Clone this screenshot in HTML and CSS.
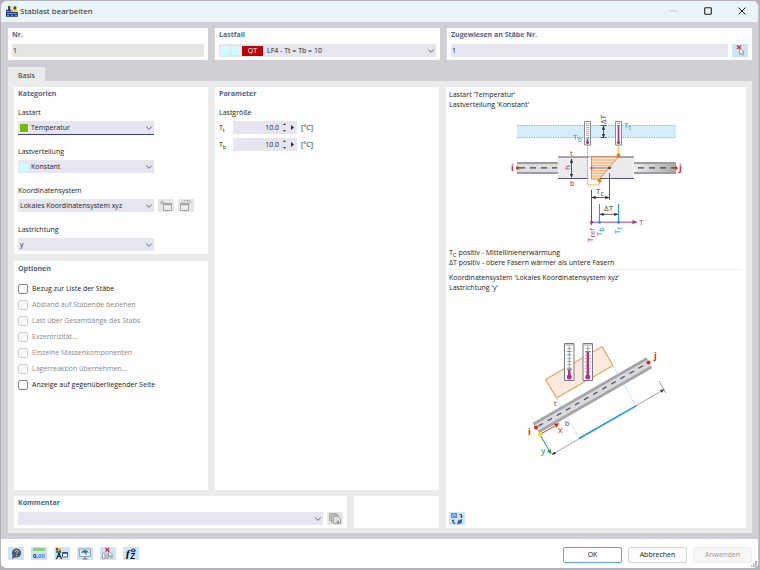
FILE: index.html
```html
<!DOCTYPE html>
<html lang="de">
<head>
    <meta charset="UTF-8">
    <meta name="viewport" content="width=device-width, initial-scale=1.0">
    <title>Stablast bearbeiten</title>
    <link rel="stylesheet" href="styles.css">
</head>
<body>
    <!-- Shared symbols -->
    <svg class="symbols" aria-hidden="true">
        <symbol id="chevron" viewBox="0 0 8 6"><path d="M1.2 1.5 4 4.3 6.8 1.5" fill="none" stroke="#555" stroke-width=".9"/></symbol>
        <marker id="arrow" viewBox="0 0 6 6" refX="5.5" refY="3" markerWidth="4" markerHeight="4" markerUnits="userSpaceOnUse" orient="auto-start-reverse"><path d="M0 .5 6 3 0 5.5z" fill="#333"/></marker>
        <marker id="arrow-purple" viewBox="0 0 6 6" refX="5.5" refY="3" markerWidth="5" markerHeight="5" markerUnits="userSpaceOnUse" orient="auto"><path d="M0 .5 6 3 0 5.5z" fill="#b03a8c"/></marker>
        <marker id="arrow-red" viewBox="0 0 6 6" refX="5.5" refY="3" markerWidth="5" markerHeight="5" markerUnits="userSpaceOnUse" orient="auto"><path d="M0 .3 6 3 0 5.7z" fill="#d03010"/></marker>
        <marker id="arrow-green" viewBox="0 0 6 6" refX="5.5" refY="3" markerWidth="5" markerHeight="5" markerUnits="userSpaceOnUse" orient="auto"><path d="M0 .3 6 3 0 5.7z" fill="#12a050"/></marker>
    </svg>

    <div class="window">
        <header class="titlebar">
            <svg class="app-icon" viewBox="0 0 12 12">
                <rect x="1" y="1" width="4" height="4" fill="#fff2b8"/>
                <path d="M5 0h6.5v6H5z" fill="#f7e9b0"/>
                <path d="M2.2 1h2v4.5h-2zM0 4.8h7v1.7H0z" fill="#1f3473"/>
                <path d="M7 3h3M8.5 1.5 10 3 8.5 4.5" stroke="#1f3473" stroke-width="1.1" fill="none"/>
                <path d="M5 5h6.5v1.6H5z" fill="#f0c330"/>
                <path d="M0 7h11.8v4.8H0z" fill="#16337f"/>
                <path d="M1 8.6h9.6M1 10.4h2M5 10.4h2M9 10.4h2" stroke="#c9d4ee" stroke-width=".7"/>
            </svg>
            <span class="title">Stablast bearbeiten</span>
            <div class="window-controls">
                <button type="button" aria-label="Minimieren" disabled><svg viewBox="0 0 10 10"><path d="M1 5h8" stroke="#c3cdd2" stroke-width="1"/></svg></button>
                <button type="button" aria-label="Maximieren"><svg viewBox="0 0 10 10"><rect x="1.7" y="1.7" width="6.6" height="6.6" rx=".8" fill="none" stroke="#222" stroke-width="1.1"/></svg></button>
                <button type="button" aria-label="Schließen"><svg viewBox="0 0 10 10"><path d="m1.5 1.5 7 7m0-7-7 7" stroke="#222" stroke-width="1"/></svg></button>
            </div>
        </header>

        <main class="content">
            <div class="top-row">
                <section class="card">
                    <h2><label for="number">Nr.</label></h2>
                    <input class="text readonly" id="number" type="text" value="1" readonly>
                </section>
                <section class="card">
                    <h2><label for="loadcase">Lastfall</label></h2>
                    <div class="select">
                        <span class="swatch cyan"></span>
                        <span class="swatch cyan"></span>
                        <span class="tag">QT</span>
                        <select id="loadcase"><option>LF4 - Tt = Tb = 10</option></select>
                        <svg class="chevron"><use href="#chevron"/></svg>
                    </div>
                </section>
                <section class="card">
                    <h2><label for="members">Zugewiesen an Stäbe Nr.</label></h2>
                    <div class="row">
                        <input class="text" id="members" type="text" value="1">
                        <button type="button" class="icon-btn" aria-label="Stäbe auswählen">
                            <svg viewBox="0 0 16 13"><path d="m5 1.5 4 3.5M9 1.5 5 5" stroke="#dc2030" stroke-width="1.2"/><path d="M7.5 4v6.4L9 9l1.4 2.4 1.2-.7-1.2-2.2 1.8-.3z" fill="#fff" stroke="#777" stroke-width=".7"/></svg>
                        </button>
                    </div>
                </section>
            </div>

            <nav class="tabs"><button type="button" class="tab">Basis</button></nav>

            <div class="tab-page">
                <div class="form-area">
                    <div class="columns">
                        <div class="left-column">
                            <section class="card categories">
                                <h2>Kategorien</h2>
                                <div class="field">
                                    <label for="type">Lastart</label>
                                    <div class="select active">
                                        <span class="swatch green"></span>
                                        <select id="type"><option>Temperatur</option></select>
                                        <svg class="chevron"><use href="#chevron"/></svg>
                                    </div>
                                </div>
                                <div class="field">
                                    <label for="distribution">Lastverteilung</label>
                                    <div class="select">
                                        <span class="swatch cyan"></span>
                                        <select id="distribution"><option>Konstant</option></select>
                                        <svg class="chevron"><use href="#chevron"/></svg>
                                    </div>
                                </div>
                                <div class="field">
                                    <label for="system">Koordinatensystem</label>
                                    <div class="row">
                                        <div class="select">
                                            <select id="system"><option>Lokales Koordinatensystem xyz</option></select>
                                            <svg class="chevron"><use href="#chevron"/></svg>
                                        </div>
                                        <button type="button" class="icon-btn off" aria-label="Neues Koordinatensystem" disabled>
                                            <svg viewBox="0 0 16 13" fill="none" stroke="#a5a5a5"><path d="M5.5 4.5h8v7h-8z" fill="#eee"/><path d="M5.5 5.5h8" stroke-width="1.4"/><path d="M4 1v5M1.5 3.5h5M2.2 1.8l3.5 3.5M5.7 1.8 2.2 5.3" stroke-width=".6"/></svg>
                                        </button>
                                        <button type="button" class="icon-btn off" aria-label="Koordinatensystem bearbeiten" disabled>
                                            <svg viewBox="0 0 16 13" fill="none" stroke="#a5a5a5"><path d="M2.5 4.5h8v7h-8z" fill="#eee"/><path d="M2.5 5.5h8" stroke-width="1.4"/><path d="M5 3.5c1-2 3-2 4-1.5l3-1M9 3l3 2M11 1l2.500 3" stroke-width=".9"/></svg>
                                        </button>
                                    </div>
                                </div>
                                <div class="field">
                                    <label for="direction">Lastrichtung</label>
                                    <div class="select">
                                        <select id="direction"><option>y</option></select>
                                        <svg class="chevron"><use href="#chevron"/></svg>
                                    </div>
                                </div>
                            </section>

                            <section class="card options">
                                <h2>Optionen</h2>
                                <label><input type="checkbox">Bezug zur Liste der Stäbe</label>
                                <label class="off"><input type="checkbox" disabled>Abstand auf Stabende beziehen</label>
                                <label class="off"><input type="checkbox" disabled>Last über Gesamtlänge des Stabs</label>
                                <label class="off"><input type="checkbox" disabled>Exzentrizität...</label>
                                <label class="off"><input type="checkbox" disabled>Einzelne Massenkomponenten</label>
                                <label class="off"><input type="checkbox" disabled>Lagerreaktion übernehmen...</label>
                                <label><input type="checkbox">Anzeige auf gegenüberliegender Seite</label>
                            </section>
                        </div>

                        <section class="card parameters">
                            <h2>Parameter</h2>
                            <p>Lastgröße</p>
                            <div class="param">
                                <label for="tt">T<sub>t</sub></label>
                                <div class="number">
                                    <input id="tt" type="text" value="10.0">
                                    <svg viewBox="0 0 16 13"><path d="M4 4 5.5 2.2 7 4zM4 9l1.5 1.8L7 9zM12 4v5l3-2.5z" fill="#333"/></svg>
                                </div>
                                <span>[°C]</span>
                            </div>
                            <div class="param">
                                <label for="tb">T<sub>b</sub></label>
                                <div class="number">
                                    <input id="tb" type="text" value="10.0">
                                    <svg viewBox="0 0 16 13"><path d="M4 4 5.5 2.2 7 4zM4 9l1.5 1.8L7 9zM12 4v5l3-2.5z" fill="#333"/></svg>
                                </div>
                                <span>[°C]</span>
                            </div>
                        </section>
                    </div>

                    <div class="bottom-row">
                        <section class="card">
                            <h2><label for="comment">Kommentar</label></h2>
                            <div class="row">
                                <div class="select">
                                    <select id="comment"><option></option></select>
                                    <svg class="chevron"><use href="#chevron"/></svg>
                                </div>
                                <button type="button" class="icon-btn off" aria-label="Kommentare" disabled>
                                    <svg viewBox="0 0 16 13" fill="#ccc" stroke="#999" stroke-width=".8"><path d="M2.5 1.5h7v7h-7z"/><path d="M4.5 3h7v7h-7z"/><path d="M6.5 4.5h5l2 2v5h-7z" fill="#e2e2e2"/><path d="M10 9h2v2h-2z" fill="#999"/></svg>
                                </button>
                            </div>
                        </section>
                        <section class="card"></section>
                    </div>
                </div>

                <section class="card preview">
                    <div class="preview-part">
                        <p>Lastart 'Temperatur'<br>Lastverteilung 'Konstant'</p>
                        <svg class="section-diagram" viewBox="506 112 180 136">
                            <defs>
                                <linearGradient id="beam-fade"><stop offset="0" stop-color="#ececec"/><stop offset="1" stop-color="#a9a9a9"/></linearGradient>
                            </defs>
                            <!-- temperature band -->
                            <rect x="517" y="125.5" width="159" height="12" fill="#d5edf9"/>
                            <path d="M517 125.5h159M517 137.5h159" stroke="#4ab4e6" stroke-width=".9" stroke-dasharray="1.2 1.2"/>
                            <!-- beam -->
                            <path d="M517 162h41v11.5h-41z" fill="#dedede"/>
                            <path d="M634 162h42v11.5h-42z" fill="url(#beam-fade)"/>
                            <path d="M517 163h41M517 173h41M634 163h42M634 173h42" stroke="#9c9ca0" stroke-width="1.8"/>
                            <path d="M558 157h76v5l-2 3 3 3-2 3 1 8h-76z" fill="#ebebed"/>
                            <path d="M558 157h76M558 178.5h76" stroke="#555566"/>
                            <path d="M519 167.8h38M638 167.8h37" stroke="#45455f" stroke-width="1.2" stroke-dasharray="6 5"/>
                            <path d="M588.500 157h2.500v22h-2.500z" fill="#fff"/>
                            <!-- temperature profile -->
                            <path d="M591.500 157h26.500l-18.500 22h-8z" fill="#fbe6d2" stroke="#ee8420"/>
                            <path d="M591 160h24M591 163h22M591 165.700h20M591 170.700h15M591 173.300h13M591 176h11" stroke="#f0994a" stroke-width=".8"/>
                            <path d="M587.5 145v39.800h12V180M618.500 145v9" fill="none" stroke="#ee8420" stroke-width=".9" stroke-dasharray="1.5 1"/>
                            <path d="M591 168h18" stroke="#55505f" stroke-width=".8"/>
                            <circle cx="618.500" cy="155.200" r="1.900" fill="#f08018"/>
                            <circle cx="599.500" cy="180.500" r="1.900" fill="#f08018"/>
                            <circle cx="591.500" cy="168" r="1.200" fill="#b03a8c"/>
                            <circle cx="609.500" cy="168" r="1.300" fill="#333344"/>
                            <circle cx="517.500" cy="168" r="1.700" fill="#d83a10"/>
                            <circle cx="676" cy="168" r="1.700" fill="#d83a10"/>
                            <!-- thermometers -->
                            <path d="M584.500 121.500h6v23.500h-6zM615.500 121.500h6v23.500h-6z" fill="#fff" stroke="#8a8a90"/>
                            <path d="M587.500 123v15M618.500 123v3" stroke="#999" stroke-width="3" stroke-dasharray=".7 1.300"/>
                            <path d="M587.500 139v4M618.500 126v17" stroke="#b02a80" stroke-width="1.700"/>
                            <circle cx="587.500" cy="142.500" r="1.500" fill="#b02a80"/>
                            <circle cx="618.500" cy="142.500" r="1.500" fill="#b02a80"/>
                            <path d="M586 138h3M617 125.500h3" stroke="#1a9ce0"/>
                            <!-- dimensions -->
                            <g stroke="#333" stroke-width=".8" marker-start="url(#arrow)" marker-end="url(#arrow)">
                                <path d="M603.500 126v11.500"/>
                                <path d="M571.500 159v18.500"/>
                                <path d="M592 197.500h17"/>
                                <path d="M600 214.300h18"/>
                            </g>
                            <path d="M600.500 125.500h6M600.500 137.500h6M591.500 190v35M609.500 173v27" stroke="#333" stroke-width=".8"/>
                            <path d="M599.500 204v18M618.500 204v18" stroke="#18a0e4"/>
                            <path d="M591 222.200h46" stroke="#b03a8c" marker-end="url(#arrow-purple)"/>
                            <circle cx="591.500" cy="222.200" r="1.600" fill="#b03a8c"/>
                            <circle cx="599.500" cy="222.200" r="1.600" fill="#18a0e4"/>
                            <circle cx="618.500" cy="222.200" r="1.600" fill="#18a0e4"/>
                            <g class="t8">
                                <text transform="translate(606 124) rotate(-90)">ΔT</text>
                                <text class="blue" x="573" y="140">T<tspan class="idx" dy="2">b</tspan></text>
                                <text class="blue" x="624" y="128">T<tspan class="idx" dy="2">t</tspan></text>
                                <text x="596" y="194">T<tspan class="idx" dy="2">c</tspan></text>
                                <text x="604" y="211">ΔT</text>
                                <text class="purple" x="639" y="225">T</text>
                                <text class="purple" transform="translate(593 242) rotate(-90)">T<tspan class="idx" dy="2">ref</tspan></text>
                                <text class="blue" transform="translate(602 236) rotate(-90)">T<tspan class="idx" dy="2">b</tspan></text>
                                <text class="blue" transform="translate(620 234) rotate(-90)">T<tspan class="idx" dy="2">t</tspan></text>
                                <text transform="translate(570 170) rotate(-90)">h</text>
                                <text class="idx" x="570" y="156">t</text>
                                <text class="idx" x="570" y="186">b</text>
                                <text class="node" x="511" y="171">i</text>
                                <text class="node" x="679" y="171">j</text>
                            </g>
                        </svg>
                        <p>T<sub>C</sub> positiv - Mittellinienerwärmung<br>ΔT positiv - obere Fasern wärmer als untere Fasern</p>
                    </div>
                    <div class="preview-part">
                        <p>Koordinatensystem 'Lokales Koordinatensystem xyz'<br>Lastrichtung 'y'</p>
                        <svg class="member-diagram" viewBox="516 336 160 126">
                            <path d="M545.5 379.5 602 346.5l11 19-56.5 32.5z" fill="#fdeadf" stroke="#ee8a30"/>
                            <path d="m557 399 22 39M614 367l22 39" stroke="#79c8ee" stroke-width=".8" stroke-dasharray="1.5 1.2"/>
                            <!-- member -->
                            <path d="M533 423.5 646.5 358l5 9.500L539 432.500z" fill="#d9d9d9"/>
                            <path d="M533.5 424 647 358.500M538.500 432 651.500 367" stroke="#a6a6aa" stroke-width="2.600"/>
                            <path d="M536 427.500 648.500 362.500" stroke="#43435c" stroke-width="1.200" stroke-dasharray="5 5.500" stroke-dashoffset="-3"/>
                            <circle cx="536" cy="427.500" r="2" fill="#d03010"/>
                            <circle cx="648.500" cy="362.500" r="2" fill="#d03010"/>
                            <!-- thermometers -->
                            <path d="M564.500 343.500h9.500v37h-9.500zM583 343.500h9.500v37H583z" fill="#fff" stroke="#77777c"/>
                            <path d="M564.500 345h9.500M583 345h9.500" stroke="#999"/>
                            <path d="M569.300 348v21M587.800 348v4" stroke="#777" stroke-width="5" stroke-dasharray=".6 2.700"/>
                            <path d="M585.300 355v18M590.300 355v18" stroke="#777" stroke-width="1.500" stroke-dasharray=".6 2.700"/>
                            <path d="M569.300 346v28M587.800 346v28" stroke="#777" stroke-width=".7"/>
                            <path d="M569.300 370v7M587.800 352v25" stroke="#b2307e" stroke-width="2.500"/>
                            <circle cx="569.300" cy="377" r="2.500" fill="#b2307e"/>
                            <circle cx="587.800" cy="377" r="2.500" fill="#b2307e"/>
                            <path d="M567 369.500h5M585 351.800h6" stroke="#2aa4e2"/>
                            <!-- dimension line -->
                            <path d="M552 454.500 664 389.500" stroke="#777788" stroke-width=".7" marker-start="url(#arrow)" marker-end="url(#arrow)"/>
                            <path d="m659 381 7 12" stroke="#666" stroke-width=".7"/>
                            <path d="M579 438.500 636 405.800" stroke="#18a0e4" stroke-width="1.500"/>
                            <!-- local axes -->
                            <path d="M540 434.500 559 423.500" stroke="#d03010" marker-end="url(#arrow-red)"/>
                            <path d="m540 434.500 11 19.500" stroke="#12a050" marker-end="url(#arrow-green)"/>
                            <circle cx="539.800" cy="434.300" r="2" fill="#ffdd00"/>
                            <g class="t8">
                                <text class="node" x="528" y="435">i</text>
                                <text class="node" x="654" y="359">j</text>
                                <text class="axis red" x="558" y="433">x</text>
                                <text class="axis lime" x="541" y="454">y</text>
                                <text class="idx" x="554" y="406">t</text>
                                <text class="idx" x="565" y="426">b</text>
                            </g>
                        </svg>
                    </div>
                    <button type="button" class="icon-btn" aria-label="Ansicht wechseln">
                        <svg viewBox="0 0 16 13"><path d="M2 1h6v5H2z" fill="#5b8def"/><path d="m3 5 2-3 2 2" stroke="#cfe2ff" stroke-width=".8" fill="none"/><path d="M9 8.500 13 7v4l-5 1.500z" fill="#405f9f"/><path d="M10.500 2.500h2v3M11.400 4.500l1.100 1.200 1.200-1.200M6.500 11H4V8M3 9l1-1.200L5.200 9" fill="none" stroke="#333" stroke-width=".9"/></svg>
                    </button>
                </section>
            </div>
        </main>

        <footer class="footer">
            <button type="button" class="icon-btn" aria-label="Hilfe">
                <svg viewBox="0 0 16 13"><circle cx="8.500" cy="6" r="4.600" fill="#505960"/><path d="M5 8 3.500 12 8 10z" fill="#505960"/><path d="M7 5c0-2 3-2 3-.3 0 1-1.500 1-1.500 2.300M8.500 8v1" fill="none" stroke="#d8e4ec" stroke-width=".9"/></svg>
            </button>
            <button type="button" class="icon-btn" aria-label="Einheiten">
                <svg viewBox="0 0 16 13"><path d="M2 1h12v3H2z" fill="#8bce80"/><text x="2" y="11" class="digits">0,<tspan fill="#2f6ee0">00</tspan></text></svg>
            </button>
            <button type="button" class="icon-btn" aria-label="Anzeige">
                <svg viewBox="0 0 16 13"><path d="M2 1h2.500v2.500H2z" fill="#e02020"/><path d="M4.500 1H7v2.500H4.500z" fill="#f0d000"/><path d="M2 3.500h2.500V6H2z" fill="#18a030"/><path d="M4.500 3.500H7V6H4.500z" fill="#2050d0"/><path d="m5 6-2.500 6M5 6l2.500 6M3.500 9.500h3" stroke="#222" stroke-width="1.200"/><path d="M8.500 5.500h5v4.500h-5z" fill="#fff" stroke="#23407f" stroke-width=".8"/><path d="M8.500 6h5" stroke="#23407f" stroke-width="1.400"/></svg>
            </button>
            <button type="button" class="icon-btn" aria-label="Ansicht">
                <svg viewBox="0 0 16 13"><path d="M2.500 2h11v7.500h-11z" fill="#dcebf5" stroke="#8794a0" stroke-width=".8"/><path d="M8 9.500V12M5.500 12h5" stroke="#777"/><path d="M4 6c2-4 6-4 8 0L9.500 5v3L7 5.500z" fill="#3f719f"/></svg>
            </button>
            <button type="button" class="icon-btn" aria-label="Auswahl löschen">
                <svg viewBox="0 0 16 13"><path d="M2.500 6h2.500v5.500H2.500zM6 8h2v3.500H6z" fill="#eee" stroke="#888" stroke-width=".7"/><path d="m5.500 1 3.500 3.500M9 1 5.500 4.500" stroke="#e02030" stroke-width="1.200"/><path d="M8.500 4v6L10 8.800l1.200 2.400 1.200-.6-1.200-2.300 1.600-.4z" fill="#fff" stroke="#777" stroke-width=".7"/></svg>
            </button>
            <button type="button" class="icon-btn" aria-label="Formeln">
                <svg viewBox="0 0 16 13"><text x="3" y="10" class="fx">f</text><path d="M8 6.500h3.500L8 11.500h4" fill="none" stroke="#222" stroke-width="1.100"/><path d="M7.500 3.500c1.500-2.700 4-2.700 5.500 0-1.500 2.500-4 2.500-5.500 0z" fill="#2c4389"/><circle cx="10.300" cy="3.300" r=".8" fill="#fff"/></svg>
            </button>
            <div class="actions">
                <button type="button" class="btn primary">OK</button>
                <button type="button" class="btn">Abbrechen</button>
                <button type="button" class="btn" disabled>Anwenden</button>
            </div>
            <svg class="grip" viewBox="0 0 6 6"><path d="M4 0h2v2H4zM2 2.500h1.500V4H2zM4 2.500h2v1.500H4zM0 4.500h1.500V6H0zM2 4.500h1.500V6H2zM4 4.500h2V6H4z" fill="#aaa"/></svg>
        </footer>
    </div>
</body>
</html>
```

FILE: styles.css
```css
* {
    box-sizing: border-box;
}

body {
    margin: 0;
    padding: 1px;
    background-color: #b4b4b8;
    color: #222;
    font-family: "Open Sans", "Noto Sans", sans-serif;
    font-size: 7px;
    line-height: 10px;
}

h2, p {
    margin: 0;
    font-size: 7px;
}

h2 {
    color: #4f6591;
    font-weight: 700;
}

sub {
    font-size: 6px;
    line-height: 0;
}

button, input, select {
    margin: 0;
    padding: 0;
    border: none;
    background: none;
    color: inherit;
    font: inherit;
}

.symbols {
    position: absolute;
    width: 0;
    height: 0;
}

.window {
    display: flex;
    flex-direction: column;
    min-height: calc(100vh - 2px);
    border-right: 1px solid #c4c4ca;
    border-bottom: 1px solid #b4b4b8;
    border-radius: 6px;
    background-color: white;
    overflow: hidden;
}

/* Title bar */
.titlebar {
    display: flex;
    align-items: center;
    height: 21px;
    padding: 0 10px 2px 5px;
    background-color: #e9f5f9;
}

.app-icon {
    width: 12px;
    height: 12px;
    margin-right: 2px;
}

.title {
    font-size: 8px;
}

.window-controls {
    display: flex;
    gap: 22px;
    margin-left: auto;
}

.window-controls button {
    width: 12px;
    height: 12px;
}

.window-controls svg {
    display: block;
    width: 10px;
    height: 10px;
    margin: auto;
}

/* Content */
.content {
    flex: 1;
    display: flex;
    flex-direction: column;
    padding: 6px 6px 6px 7px;
    background-color: #d0cfd5;
}

.card {
    min-width: 0;
    padding: 1px 4px 3px;
    background-color: white;
}

.top-row {
    display: grid;
    grid-template-columns: 200px 225px 1fr;
    gap: 7px;
}

.top-row h2, .bottom-row h2 {
    margin: 1px 0 4px;
}

.row {
    display: flex;
    gap: 4px;
}

.text {
    display: block;
    width: 100%;
    height: 13px;
    padding: 0 1px;
    background-color: #e6e6f1;
}

.readonly {
    background-color: #e5e5e5;
}

.select {
    position: relative;
    flex: 1;
    display: flex;
    align-items: center;
    gap: 2px;
    height: 13px;
    padding-left: 2px;
    background-color: #e6e6f1;
}

.select select {
    flex: 1;
    min-width: 0;
    height: 13px;
    padding-right: 12px;
    appearance: none;
}

.chevron {
    position: absolute;
    right: 1px;
    top: 4px;
    width: 8px;
    height: 6px;
    pointer-events: none;
}

.swatch {
    width: 8px;
    height: 8px;
    margin-right: 1px;
}

.cyan {
    background-color: #ccffff;
}

.green {
    background-color: #7ab800;
}

.tag {
    width: 21px;
    height: 10px;
    margin-left: -1px;
    margin-right: 2px;
    background-color: #c00000;
    color: white;
    text-align: center;
}

.icon-btn {
    flex: none;
    width: 16px;
    height: 13px;
    background-color: #cce4f7;
}

.icon-btn.off {
    background-color: #e7e7e7;
}

.icon-btn svg {
    display: block;
    width: 16px;
    height: 13px;
}

/* Tabs */
.tabs {
    margin-top: 7px;
    height: 14px;
}

.tab {
    width: 37px;
    height: 14px;
    padding-top: 3px;
    background-color: #ebebeb;
}

.tab-page {
    flex: 1;
    display: grid;
    grid-template-columns: 425px 1fr;
    gap: 7px;
    padding: 6px 6px 5px;
    background-color: #ebebeb;
}

.form-area {
    display: flex;
    flex-direction: column;
    gap: 6px;
}

.left-column {
    display: flex;
    flex-direction: column;
    gap: 7px;
}

.columns {
    flex: 1;
    display: grid;
    grid-template-columns: 194px 1fr;
    gap: 7px;
}

.bottom-row {
    display: grid;
    grid-template-columns: 1fr 85px;
    gap: 7px;
}

.columns .card {
    padding-top: 2px;
}

.categories h2 {
    margin-bottom: 9px;
}

.field + .field {
    margin-top: 13px;
}

.field label {
    display: block;
    margin-bottom: 3px;
}

.field .select {
    flex: none;
    width: 136px;
}

.field .active {
    box-shadow: 0 1px #3c3c9c;
}

/* Options */
.options {
    flex: 1;
}

.options h2 {
    margin: 1px 0 7px;
}

.options label {
    display: flex;
    align-items: center;
    gap: 4px;
    height: 16px;
}

.options .off {
    color: #8a8a8a;
}

.options input {
    width: 10px;
    height: 10px;
    border: 1px solid #888;
    border-radius: 2px;
    background-color: #fafafa;
    appearance: none;
}

.options .off input {
    border-color: #ccc;
}

/* Parameters */
.parameters p {
    margin: 9px 0 3px;
}

.param {
    display: flex;
    align-items: center;
    gap: 4px;
    margin-bottom: 4px;
}

.param label {
    width: 10px;
}

.number {
    display: flex;
    width: 64px;
    height: 13px;
    background-color: #e6e6f1;
}

.number input {
    flex: 1;
    min-width: 0;
    text-align: right;
}

.number svg {
    width: 16px;
    height: 13px;
    margin-right: 2px;
}

/* Preview */
.preview {
    display: flex;
    flex-direction: column;
    padding: 3px 4px 3px 3px;
}

.preview-part + .preview-part {
    flex: 1;
    margin-top: 1px;
    padding-top: 3px;
    border-top: 1px solid #eee;
}

.preview svg {
    display: block;
}

.preview .section-diagram {
    width: 180px;
    height: 136px;
    margin: 2px auto 0;
}

.preview .member-diagram {
    width: 160px;
    height: 126px;
    margin: 43px auto 0;
}

.t8 {
    fill: #444;
    font-size: 8px;
}

.idx {
    font-size: 7px;
}

.blue {
    fill: #1a9ce0;
}

.purple {
    fill: #b03a8c;
}

.axis {
    font-size: 9px;
}

.lime {
    fill: #12a050;
}

.red {
    fill: #d03010;
}

.node {
    fill: #c8300c;
    font-size: 9px;
    font-weight: 700;
}

.digits {
    font-size: 6px;
    font-weight: 600;
}

.fx {
    font-family: "Liberation Serif", serif;
    font-size: 11px;
    font-style: italic;
    font-weight: 700;
}

/* Footer */
.footer {
    position: relative;
    display: flex;
    align-items: center;
    gap: 7px;
    height: 29px;
    padding: 0 6px 0 7px;
    background-color: white;
}

.actions {
    display: flex;
    gap: 6px;
    margin-top: 2px;
    margin-left: auto;
}

.btn {
    width: 59px;
    height: 16px;
    border: 1px solid #d4d4d4;
    border-radius: 2px;
    background-color: #fdfdfd;
}

.btn.primary {
    border-color: #5aa9e6;
}

.btn:disabled {
    border-color: #eee;
    background-color: #f7f7f7;
    color: #9a9a9a;
}

.grip {
    position: absolute;
    right: 1px;
    bottom: 1px;
    width: 6px;
    height: 6px;
}
```
